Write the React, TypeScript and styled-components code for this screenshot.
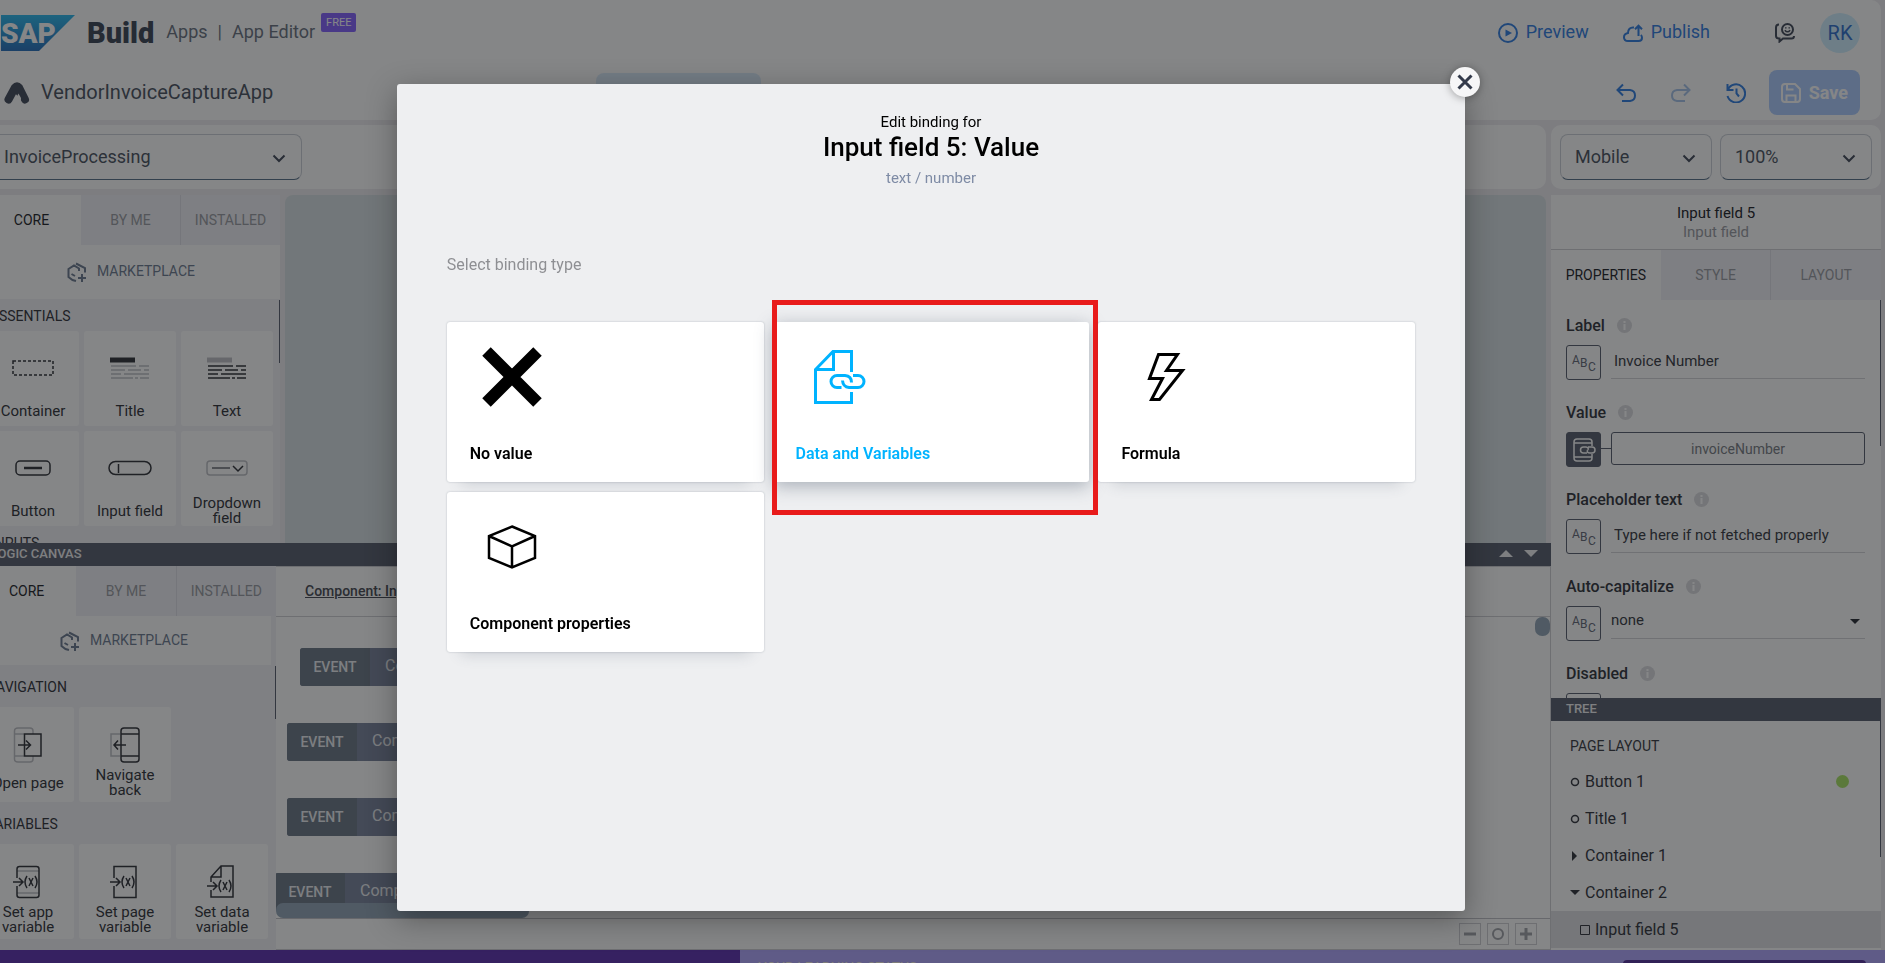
import React from "react";
import styled, { createGlobalStyle } from "styled-components";

const FONT = 'Roboto, "Liberation Sans", Arial, sans-serif';

const GlobalStyle = createGlobalStyle`
  *, *::before, *::after { box-sizing: border-box; }
  html, body { margin: 0; padding: 0; height: 100%; overflow: hidden; }
  body { font-family: ${FONT}; font-size: 15px; color: #2b2f37; background: #efedf1; }
  button, input, select { font-family: inherit; font-size: inherit; color: inherit; margin: 0; }
  button { background: none; border: 0; padding: 0; cursor: pointer; }
  h1, h2, h3, p, ul { margin: 0; padding: 0; font-weight: inherit; font-size: inherit; }
  ul { list-style: none; }
  svg { display: block; flex: none; }
`;

/* ---------- shell ---------- */

const Shell = styled.div`
  display: flex;
  flex-direction: column;
  height: 100vh;
  margin-left: -23px;
  overflow: hidden;
`;

const Workspace = styled.div`
  flex: 1;
  min-height: 0;
  display: flex;
  flex-direction: column;
  padding-right: 4px;
`;

const Header = styled.header`
  flex: none;
  height: 120px;
  background: #fff;
  border-radius: 0 10px 10px 10px;
  padding: 6px 21px 0 24px;
`;

const HeaderRow = styled.div<{ $height: number }>`
  display: flex;
  align-items: center;
  justify-content: space-between;
  height: ${(p) => p.$height}px;
`;

const Group = styled.div<{ $gap: number }>`
  display: flex;
  align-items: center;
  gap: ${(p) => p.$gap}px;
`;

const AppTitle = styled(Group)`
  width: 32%;
  padding-left: 3px;
`;

const Tools = styled(Group)`
  margin-left: auto;
`;

const Brand = styled.span`
  font-size: 29px;
  line-height: 32px;
  font-weight: 900;
  color: #3f4858;
`;

const Crumbs = styled.nav`
  display: flex;
  gap: 10px;
  padding-bottom: 2px;
  font-size: 18px;
  line-height: 22px;
  color: #6d7583;
  a { color: inherit; text-decoration: none; }
`;

const FreeBadge = styled.span`
  align-self: flex-start;
  margin-top: -8px;
  padding: 0 5px;
  font-size: 11px;
  line-height: 19px;
  border-radius: 2px;
  color: #fff;
  background: #8665ff;
`;

const AppName = styled.h1`
  padding-bottom: 2px;
  font-size: 20px;
  line-height: 24px;
  color: #4d5563;
`;

const LinkButton = styled.button`
  display: flex;
  align-items: center;
  gap: 8px;
  font-size: 18px;
  line-height: 22px;
  color: #3580e2;
  span { padding-bottom: 2px; }
`;

const IconButton = styled.button<{ $color: string }>`
  display: flex;
  color: ${(p) => p.$color};
`;

const Avatar = styled.button`
  width: 40px;
  height: 40px;
  border-radius: 50%;
  background: #d1efff;
  color: #3373cf;
  font-size: 20px;
  line-height: 38px;
`;

const SaveButton = styled.button`
  display: flex;
  align-items: center;
  gap: 8px;
  height: 45px;
  padding: 0 12px;
  border-radius: 8px;
  background: #afcdff;
  color: #fff;
  font-size: 18px;
  font-weight: 700;
`;

const CanvasTab = styled.button`
  width: 165px;
  height: 40px;
  border-radius: 8px;
  background: #dcecfb;
`;

/* ---------- toolbar ---------- */

const Toolbar = styled.div`
  flex: none;
  display: flex;
  gap: 5px;
  height: 64px;
  margin: 5px 0 6px;
`;

const ToolbarPanel = styled.div<{ $width?: number }>`
  ${(p) => (p.$width ? `flex: none; width: ${p.$width}px; padding: 0 9px;` : "flex: 1; padding: 0 12px;")}
  display: flex;
  align-items: center;
  gap: 8px;
  background: #fff;
  border-radius: 10px;
`;

const SelectBox = styled.div<{ $width?: number }>`
  position: relative;
  ${(p) => (p.$width ? `width: ${p.$width}px;` : "flex: 1;")}
  select {
    appearance: none;
    width: 100%;
    height: 46px;
    padding: 0 14px 2px;
    border: 1px solid #cdd1d8;
    border-bottom: 1px solid #5b738b;
    border-radius: 8px;
    background: transparent;
    font-size: 18px;
    color: #4d5563;
  }
  svg { position: absolute; right: 16px; top: 20px; pointer-events: none; }
`;

/* ---------- main split ---------- */

const Main = styled.div`
  flex: 1;
  min-height: 0;
  display: flex;
`;

const LeftSide = styled.div`
  flex: 1;
  min-width: 0;
  display: flex;
  flex-direction: column;
`;

const Designer = styled.div`
  flex: 1;
  min-height: 0;
  display: flex;
  gap: 5px;
  padding: 0 5px;
`;

const DeviceArea = styled.div`
  flex: 1;
  background: #d9e1e4;
  border-radius: 8px 8px 0 0;
`;

const Library = styled.aside<{ $width: number }>`
  position: relative;
  flex: none;
  width: ${(p) => p.$width}px;
  display: flex;
  flex-direction: column;
  overflow: hidden;
  background: #f3f3f7;
`;

const ScrollThumb = styled.span<{ $top: number; $height: number }>`
  position: absolute;
  right: 0;
  top: ${(p) => p.$top}px;
  width: 1px;
  height: ${(p) => p.$height}px;
  background: #5b6170;
`;

const Tabs = styled.div`
  flex: none;
  display: flex;
  height: 50px;
`;

const Tab = styled.button<{ $active?: boolean }>`
  flex: 1;
  font-size: 14px;
  color: ${(p) => (p.$active ? "#23252b" : "#9b9da4")};
  background: ${(p) => (p.$active ? "#fff" : "#f1f1f6")};
  & + & + & { border-left: 1px solid #dfdfe6; }
`;

const Marketplace = styled.button<{ $height: number; $inset: number }>`
  flex: none;
  display: flex;
  align-items: center;
  justify-content: center;
  gap: 10px;
  height: ${(p) => p.$height}px;
  margin-right: ${(p) => p.$inset}px;
  font-size: 14px;
  color: #6f7d92;
  background: #fff;
  span { padding-bottom: 2px; }
`;

const GroupTitle = styled.h3<{ $height: number }>`
  height: ${(p) => p.$height}px;
  padding-left: 4px;
  font-size: 14px;
  line-height: ${(p) => p.$height + 2}px;
  color: #32343b;
`;

const Groups = styled.div`
  padding-left: 5px;
`;

const CardGrid = styled.div`
  display: grid;
  grid-template-columns: repeat(3, 92px);
  gap: 5px;
`;

const LibCard = styled.button<{ $compact?: boolean }>`
  display: flex;
  flex-direction: column;
  align-items: center;
  height: 95px;
  padding: ${(p) => (p.$compact ? "14px 0 4px" : "9px 0 0")};
  border-radius: 3px;
  background: #fff;
  color: #32343b;
`;

const CardIcon = styled.span`
  flex: 1;
  display: flex;
  align-items: center;
`;

const CardLabel = styled.span`
  flex: none;
  height: 30px;
  display: flex;
  align-items: center;
  justify-content: center;
  padding: 0 6px;
  font-size: 15px;
  line-height: 15px;
  text-align: center;
`;

/* ---------- logic canvas ---------- */

const DarkBar = styled.div`
  flex: none;
  display: flex;
  align-items: center;
  justify-content: space-between;
  height: 23px;
  padding: 0 13px 2px 14px;
  background: #5b6170;
  color: #f0f0f2;
  font-size: 13px;
  font-weight: 500;
`;

const BarButtons = styled.div`
  display: flex;
  gap: 11px;
`;

const Logic = styled.section`
  flex: none;
  display: flex;
  flex-direction: column;
  height: 407px;
`;

const LogicBody = styled.div`
  flex: 1;
  min-height: 0;
  display: flex;
`;

const Flow = styled.div`
  flex: 1;
  min-width: 0;
  display: flex;
  flex-direction: column;
  background: #fff;
  border: 1px solid #d0d0d5;
  border-left: 0;
`;

const FlowHead = styled.div`
  flex: none;
  height: 50px;
  padding-left: 29px;
  line-height: 48px;
  font-size: 14px;
  font-weight: 500;
  border-bottom: 1px solid #d0d0d5;
  color: #4a4d56;
  a { color: inherit; }
`;

const FlowCanvas = styled.div`
  position: relative;
  flex: 1;
  min-height: 0;
  overflow: hidden;
`;

const FlowNode = styled.div<{ $x: number; $y: number }>`
  position: absolute;
  left: ${(p) => p.$x}px;
  top: ${(p) => p.$y}px;
  display: flex;
  width: 200px;
  height: 38px;
  border-radius: 3px;
  overflow: hidden;
  background: #7c869e;
  color: #eceef2;
  font-size: 16px;
  line-height: 36px;
`;

const FlowKind = styled.span`
  width: 70px;
  margin-right: 15px;
  text-align: center;
  font-size: 14px;
  line-height: 38px;
  font-weight: 500;
  background: #6f7a88;
`;

const HScroll = styled.div`
  position: absolute;
  left: 0;
  bottom: 0;
  width: 253px;
  height: 15px;
  border-radius: 7px;
  background: #95a7b8;
`;

const VScroll = styled.div`
  position: absolute;
  right: 0;
  top: 0;
  width: 15px;
  height: 19px;
  border-radius: 7px;
  background: #95a7b8;
`;

const FlowFoot = styled.div`
  flex: none;
  display: flex;
  justify-content: flex-end;
  align-items: center;
  gap: 6px;
  height: 31px;
  padding-right: 13px;
  border-top: 1px solid #c2c2c8;
`;

const ZoomButton = styled.button`
  display: flex;
  align-items: center;
  justify-content: center;
  width: 22px;
  height: 22px;
  border: 1px solid #d0d0d5;
  color: #a3a5ab;
`;

/* ---------- right side ---------- */

const RightSide = styled.aside`
  flex: none;
  width: 330px;
  display: flex;
  flex-direction: column;
  background: #fff;
`;

const ObjectHead = styled.div`
  flex: none;
  height: 55px;
  padding-top: 9px;
  border-bottom: 1px solid #d0d0d5;
  text-align: center;
  font-size: 15px;
  line-height: 19px;
  color: #23252b;
  p { color: #9b9da4; }
`;

const Properties = styled.div`
  position: relative;
  flex: 1;
  min-height: 0;
  overflow: hidden;
  padding: 15px 16px 0 15px;
`;

const Field = styled.div`
  height: 87px;
`;

const FieldHead = styled.div`
  display: flex;
  align-items: center;
  gap: 12px;
  height: 20px;
  margin-bottom: 10px;
  font-size: 16px;
  font-weight: 500;
  color: #34373e;
`;

const FieldRow = styled.div`
  display: flex;
  gap: 10px;
`;

const TypeButton = styled.button<{ $filled?: boolean }>`
  flex: none;
  display: flex;
  align-items: center;
  justify-content: center;
  width: 35px;
  height: 35px;
  border: 1px solid #5b6170;
  border-radius: 3px;
  background: ${(p) => (p.$filled ? "#5b6170" : "transparent")};
  color: ${(p) => (p.$filled ? "#fff" : "#666b78")};
`;

const TextInput = styled.input`
  flex: 1;
  min-width: 0;
  height: 34px;
  padding: 0 3px 2px;
  border: 0;
  border-bottom: 1px solid #d4d5d9;
  background: transparent;
  font-size: 15px;
  color: #3a3d45;
`;

const PlainSelect = styled.div`
  position: relative;
  flex: 1;
  select {
    appearance: none;
    width: 100%;
    height: 33px;
    padding: 0 0 4px;
    border: 0;
    border-bottom: 1px solid #d4d5d9;
    background: transparent;
    font-size: 15px;
    color: #3a3d45;
  }
  svg { position: absolute; right: 5px; top: 13px; pointer-events: none; }
`;

const Connector = styled.span`
  width: 10px;
  height: 17px;
  margin: 0 -10px;
  border-bottom: 1px solid #5b6170;
`;

const BoundValue = styled.button`
  flex: 1;
  height: 33px;
  border: 1px solid #5b6170;
  border-radius: 3px;
  font-size: 14px;
  color: #7b7e86;
`;

const Tree = styled.div`
  position: relative;
  flex: none;
  height: 252px;
`;

const TreeBar = styled(DarkBar)`
  padding: 0 15px 2px;
`;

const TreeTitle = styled.h3`
  height: 42px;
  padding-left: 19px;
  font-size: 14px;
  line-height: 50px;
  color: #3a3d45;
`;

const TreeRow = styled.li<{ $depth: number; $selected?: boolean }>`
  display: flex;
  align-items: center;
  gap: 5px;
  height: 37px;
  padding-left: ${(p) => 19 + p.$depth * 10}px;
  padding-right: 32px;
  background: ${(p) => (p.$selected ? "#e0e0e4" : "transparent")};
  color: #34373e;
`;

const TreeName = styled.span`
  flex: 1;
  font-size: 16px;
  line-height: 20px;
`;

const StatusDot = styled.span`
  width: 13px;
  height: 13px;
  border-radius: 50%;
  background: #abe567;
`;

/* ---------- bottom banner ---------- */

const Banner = styled.footer`
  flex: none;
  display: flex;
  height: 13px;
  overflow: hidden;
  background: #b3a9ff;
`;

const BannerLead = styled.div`
  width: 40%;
  background: #6135b2;
`;

const BannerInfo = styled.div`
  flex: 1;
  display: flex;
  justify-content: space-between;
  align-items: flex-start;
  padding: 10px 19px 0 18px;
  font-size: 14px;
  line-height: 16px;
  color: #f3efe0;
`;

const BannerButton = styled.button`
  width: 243px;
  height: 36px;
  border-radius: 4px;
  background: #57349f;
`;

/* ---------- dialog ---------- */

const Overlay = styled.div`
  position: fixed;
  inset: 0 0 0 -23px;
  display: flex;
  justify-content: center;
  padding: 84px 0 52px;
  background: rgba(11, 13, 16, 0.5);
`;

const Dialog = styled.section`
  position: relative;
  width: 56%;
  padding: 28px 50px;
  border-radius: 3px;
  background: #eeeff1;
  box-shadow: 0 8px 30px rgba(0, 0, 0, 0.35);
  color: #000;
`;

const CloseButton = styled.button`
  position: absolute;
  top: -17px;
  right: -15px;
  display: flex;
  align-items: center;
  justify-content: center;
  width: 30px;
  height: 30px;
  border-radius: 50%;
  background: #f6f6f7;
  color: #333a4a;
  box-shadow: 0 1px 8px rgba(0, 0, 0, 0.35);
`;

const DialogHead = styled.header`
  text-align: center;
  font-size: 15px;
  line-height: 20px;
  h2 { font-size: 26px; line-height: 30px; font-weight: 500; }
`;

const TypeHint = styled.p`
  margin-top: 6px;
  color: #7e8ba5;
`;

const Prompt = styled.p`
  margin: 67px 0 47px;
  font-size: 16px;
  line-height: 20px;
  color: #8e8f93;
`;

const Options = styled.div`
  display: grid;
  grid-template-columns: repeat(3, 1fr);
  gap: 10px 9px;
`;

const OptionSlot = styled.div`
  position: relative;
  display: flex;
`;

const Option = styled.button<{ $active?: boolean }>`
  flex: 1;
  display: flex;
  flex-direction: column;
  justify-content: space-between;
  align-items: flex-start;
  height: 160px;
  padding: 25px 23px 18px;
  border-radius: 3px;
  background: #fff;
  font-size: 16px;
  line-height: 20px;
  font-weight: 600;
  color: ${(p) => (p.$active ? "#00b3ff" : "#000")};
  box-shadow: ${(p) =>
    p.$active
      ? "0 4px 18px rgba(60, 75, 95, 0.4)"
      : "0 0 2px rgba(60, 75, 95, 0.35), 0 16px 14px -14px rgba(60, 75, 95, 0.2)"};
  svg { margin-left: 12px; }
`;

const Highlight = styled.span`
  position: absolute;
  inset: -22px -9px -33px -1px;
  border: 5px solid #e81b1b;
  pointer-events: none;
`;

/* ---------- icons ---------- */

type StrokeProps = {
  size?: number;
  width?: number;
  height?: number;
  box: string;
  w?: number;
  children: React.ReactNode;
};

const Stroke = ({ size, width, height, box, w = 2, children }: StrokeProps) => (
  <svg
    width={width ?? size}
    height={height ?? size}
    viewBox={box}
    fill="none"
    stroke="currentColor"
    strokeWidth={w}
    aria-hidden="true"
  >
    {children}
  </svg>
);

const SapLogo = () => (
  <svg width="74" height="36" viewBox="0 0 74 36" role="img" aria-label="SAP">
    <defs>
      <linearGradient id="sap" x1="0" y1="0" x2="0" y2="1">
        <stop offset="0" stopColor="#2fb9ee" />
        <stop offset="1" stopColor="#2a72bd" />
      </linearGradient>
    </defs>
    <path d="M0 0H74L38 36H0Z" fill="url(#sap)" />
    <text x="0" y="28" fontFamily={FONT} fontSize="28" fontWeight="900" fill="#fff">
      SAP
    </text>
  </svg>
);

const AppLogo = () => (
  <svg width="26" height="22" viewBox="0 0 26 22" aria-hidden="true">
    <path
      d="M4.5 17.5 11 5.5Q13 3 15 5.5L21 17.5M14 8.5 17 12"
      fill="none"
      stroke="#454c5c"
      strokeWidth="8"
      strokeLinecap="round"
      strokeLinejoin="round"
    />
    <path d="M9 22 14.5 11.5 17 16 16.5 22Z" fill="#fff" />
  </svg>
);

const PlayIcon = () => (
  <Stroke size={20} box="0 0 20 20">
    <circle cx="10" cy="10" r="9" />
    <path d="M7.5 6.5 14 10 7.5 13.5Z" fill="currentColor" stroke="none" />
  </Stroke>
);

const CloudIcon = () => (
  <Stroke size={20} box="0 0 20 20">
    <path d="M11 4.5C7 4 5 6.500 5 10 2.500 10.500 1 12 1 14.200 1 16.500 2.500 18 5 18H15.500C17.800 18 19 16.500 19 14.700 19 13.500 18.500 12.500 17.800 12M15.500 13V3M12 6.200 15.500 2.700 19 6.200" />
  </Stroke>
);

const FeedbackIcon = () => (
  <Stroke size={20} box="0 0 20 20">
    <path d="M4 1.5C2 1.5 1 2.8 1 4.5V13Q1 15.5 4.500 15.500V18.500L8 15.500H16.500Q19 15.500 19 13" />
    <circle cx="12.500" cy="6.500" r="5.500" />
    <path d="M9.800 7.200Q12.500 10.500 15.200 7.200M10.800 4.200V5.500M14.200 4.200V5.500" strokeWidth="1.500" />
  </Stroke>
);

const UndoIcon = () => (
  <Stroke size={20} box="0 0 20 20">
    <path d="M7 1.5 1.5 7 7 12.5M1.5 7H14Q19 7.5 19 12.5 19 17.5 14 18H6" />
  </Stroke>
);

const RedoIcon = () => (
  <Stroke size={20} box="0 0 20 20">
    <path d="M13 1.5 18.5 7 13 12.5M18.5 7H6Q1 7.5 1 12.5 1 17.5 6 18H14" />
  </Stroke>
);

const HistoryIcon = () => (
  <Stroke size={20} box="0 0 20 20">
    <path d="M1.5 1V7H7.5M2 6.500A9 9 0 1 1 1.500 13M10.500 5.500V10.500L13 13.500" />
  </Stroke>
);

const SaveIcon = () => (
  <Stroke size={20} box="0 0 20 20">
    <path d="M4 1H14L19 6V16Q19 19 16 19H4Q1 19 1 16V4Q1 1 4 1ZM6 1V6.500H12.500M5.500 19V12.500H14.500V19" />
  </Stroke>
);

const Chevron = () => (
  <Stroke width={14} height={9} box="0 0 14 9">
    <path d="M1.500 1.500 7 7 12.500 1.500" stroke="#454c5c" />
  </Stroke>
);

const MarketIcon = () => (
  <Stroke size={20} box="0 0 20 20" w={2}>
    <path d="M9 19 5.500 18 1.500 15V7L7 3.500 12 6.500V9M9 1.500 18 6V10.500M15 12V20M11 16H19M4.500 12 8 14" />
  </Stroke>
);

const CrossIcon = () => (
  <Stroke size={16} box="0 0 16 16" w={3}>
    <path d="M1.500 1.500 14.500 14.500M14.500 1.500 1.500 14.500" />
  </Stroke>
);

const InfoIcon = () => (
  <svg width="15" height="15" viewBox="0 0 15 15" aria-hidden="true">
    <circle cx="7.500" cy="7.500" r="7.500" fill="#dcdce0" />
    <path d="M7.500 3V5M7.500 6V12" stroke="#fff" strokeWidth="2" />
  </svg>
);

const AbcIcon = () => (
  <svg width="33" height="33" viewBox="0 0 33 33" aria-label="Text" fontFamily={FONT} fontSize="12" fill="currentColor">
    <text x="5" y="18">A</text>
    <text x="13" y="21">B</text>
    <text x="21" y="25">C</text>
  </svg>
);

const PhoneLinkIcon = () => (
  <Stroke size={24} box="0 0 24 24" w={1.5}>
    <path d="M20 8V4Q20 1 17 1H5Q2 1 2 4V20Q2 23 5 23H17Q20 23 20 20V16M2 5H20M2 19H20" />
    <path d="M15 15H11.500A3 3 0 0 1 11.500 9H14Q17 9.500 16 12M16 9H20A3 3 0 0 1 20 15H18Q14.500 15 15.500 12" />
  </Stroke>
);

const TriUp = () => (
  <svg width="14" height="7" viewBox="0 0 14 7" aria-hidden="true"><path d="M0 7 7 0 14 7Z" fill="currentColor" /></svg>
);
const TriDown = () => (
  <svg width="14" height="7" viewBox="0 0 14 7" aria-hidden="true"><path d="M0 0H14L7 7Z" fill="currentColor" /></svg>
);
const TriSmall = () => (
  <svg width="10" height="5" viewBox="0 0 10 5" aria-hidden="true"><path d="M0 0H10L5 5Z" fill="currentColor" /></svg>
);
const TriRight = () => (
  <svg width="10" height="10" viewBox="0 0 10 10" aria-hidden="true"><path d="M2 0V10L7 5Z" fill="currentColor" /></svg>
);
const Ring = () => (
  <Stroke size={10} box="0 0 10 10" w={1.5}><circle cx="5" cy="5" r="3.500" /></Stroke>
);
const Square = () => (
  <Stroke size={10} box="0 0 10 10" w={1}><path d="M.5.5H9.5V9.5H.5Z" /></Stroke>
);

const ContainerIcon = () => (
  <Stroke width={42} height={16} box="0 0 42 16" w={1.5}>
    <path d="M1 1H41V15H1Z" strokeDasharray="3 2" />
  </Stroke>
);

const TextLines = ({ title }: { title: boolean }) => (
  <svg width="40" height="22" viewBox="0 0 40 22" aria-hidden="true">
    <path d="M0 3H25" stroke={title ? "#32343b" : "#c0c1c6"} strokeWidth="5" />
    <path
      d="M1 9H26M29 9H39M1 13H15M18 13H31M34 13H39M1 17H11M14 17H39M1 21H23M25 21H28M30 21H39"
      stroke={title ? "#c0c1c6" : "#32343b"}
      strokeWidth="1.500"
    />
  </svg>
);

const ButtonIcon = () => (
  <Stroke width={36} height={16} box="0 0 36 16" w={1.5}>
    <rect x="1" y="1" width="34" height="14" rx="4" />
    <path d="M9 8H27" strokeWidth="2.500" />
  </Stroke>
);

const InputIcon = () => (
  <Stroke width={44} height={16} box="0 0 44 16" w={1.5}>
    <rect x="1" y="1.500" width="42" height="13" rx="6.500" />
    <path d="M10.500 4V13" />
  </Stroke>
);

const DropdownIcon = () => (
  <Stroke width={42} height={16} box="0 0 42 16" w={1.5}>
    <rect x="1" y="1" width="40" height="14" rx="3" stroke="#c0c1c6" />
    <path d="M6 8H24" stroke="#666970" />
    <path d="M27 6 32 11 37 6" />
  </Stroke>
);

const OpenPageIcon = () => (
  <Stroke width={30} height={36} box="0 0 30 36" w={1.5}>
    <path d="M20 7V4Q20 1 17 1H5Q1.500 1 1.500 4V32Q1.500 35 5 35H17Q20 35 20 32V29M1.500 7H11M1.500 29H11" stroke="#c0c1c6" />
    <path d="M11.500 7H28V29H11.500ZM5 18H17M13 13.500 17.500 18 13 22.500" />
  </Stroke>
);

const BackIcon = () => (
  <Stroke width={30} height={36} box="0 0 30 36" w={1.5}>
    <path d="M10 7H1V29H10" stroke="#c0c1c6" />
    <rect x="11" y="1" width="18" height="34" rx="3" />
    <path d="M11 7H29M11 29H29M4 18H16M8 13.500 4 18 8 22.500" />
  </Stroke>
);

const VariableIcon = ({ kind }: { kind: "app" | "page" | "data" }) => {
  const y = kind === "data" ? 21 : 17;
  return (
    <Stroke width={32} height={34} box="0 0 32 34" w={1.5}>
      {kind === "app" && (
        <>
          <path d="M5 6H27M5 28H27" stroke="#c0c1c6" />
          <path d="M5 13V4Q5 1.500 7.500 1.500H24.500Q27 1.500 27 4V30Q27 32.500 24.500 32.500H7.500Q5 32.500 5 30V21" />
        </>
      )}
      {kind === "page" && <path d="M5 13V1.500H27V32.500H5V21" />}
      {kind === "data" && <path d="M5 17V12L15 1H27V32H5V25M15 1V12H5" />}
      <path d={`M1 ${y}H10M7 ${y - 4}L11 ${y}L7 ${y + 4}`} />
      <path d={`M15 ${y - 6}Q11 ${y} 15 ${y + 6}M23 ${y - 6}Q27 ${y} 23 ${y + 6}M17 ${y - 4}L21 ${y + 4}M21 ${y - 4}L17 ${y + 4}`} />
    </Stroke>
  );
};

const NoValueIcon = () => (
  <Stroke size={60} box="0 0 60 60" w={12}>
    <path d="M4.500 4.500 55.500 55.500M55.500 4.500 4.500 55.500" />
  </Stroke>
);

const DataIcon = () => (
  <Stroke size={60} box="0 0 60 60" w={3}>
    <path d="M43.500 25V4.500H25L7.500 22.500V55.500H43.500V45M25.500 5V22.500H8" />
    <path d="M33.500 40.500H29A6 6 0 0 1 29 28.500H37Q43.500 29 43.500 35.500M45 28.500H50A6 6 0 0 1 50 40.500H41Q35 40 34.500 33.500" />
  </Stroke>
);

const BoltIcon = () => (
  <Stroke size={60} box="0 0 60 60" w={3}>
    <path d="M25.500 7.500H44.500L33.500 23.500H49.500L26.500 52.500H18.500L29.500 31.500H16.500Z" />
  </Stroke>
);

const CubeIcon = () => (
  <Stroke size={60} box="0 0 60 60" w={2.5}>
    <path d="M30 9.500 53 19V41L30 50.500 7 41V19ZM7 19 30 29.500 53 19M30 29.500V50.500" />
  </Stroke>
);

/* ---------- parts ---------- */

type LibItem = { label: string; icon: React.ReactNode };

const Cards = ({ items, compact }: { items: LibItem[]; compact?: boolean }) => (
  <CardGrid>
    {items.map((item) => (
      <LibCard key={item.label} $compact={compact}>
        <CardIcon>{item.icon}</CardIcon>
        <CardLabel>{item.label}</CardLabel>
      </LibCard>
    ))}
  </CardGrid>
);

const LibTabs = () => (
  <Tabs role="tablist">
    <Tab role="tab" $active>CORE</Tab>
    <Tab role="tab">BY ME</Tab>
    <Tab role="tab">INSTALLED</Tab>
  </Tabs>
);

const essentials: LibItem[] = [
  { label: "Container", icon: <ContainerIcon /> },
  { label: "Title", icon: <TextLines title /> },
  { label: "Text", icon: <TextLines title={false} /> },
  { label: "Button", icon: <ButtonIcon /> },
  { label: "Input field", icon: <InputIcon /> },
  { label: "Dropdown field", icon: <DropdownIcon /> },
];

const navigation: LibItem[] = [
  { label: "Open page", icon: <OpenPageIcon /> },
  { label: "Navigate back", icon: <BackIcon /> },
];

const variables: LibItem[] = [
  { label: "Set app variable", icon: <VariableIcon kind="app" /> },
  { label: "Set page variable", icon: <VariableIcon kind="page" /> },
  { label: "Set data variable", icon: <VariableIcon kind="data" /> },
];

const nodes = [
  { x: 24, y: 31 },
  { x: 11, y: 106 },
  { x: 11, y: 181 },
  { x: -1, y: 256 },
];

const tree = [
  { name: "Button 1", mark: <Ring />, depth: 0, dot: true },
  { name: "Title 1", mark: <Ring />, depth: 0 },
  { name: "Container 1", mark: <TriRight />, depth: 0 },
  { name: "Container 2", mark: <TriSmall />, depth: 0 },
  { name: "Input field 5", mark: <Square />, depth: 1, selected: true },
];

const options = [
  { label: "No value", icon: <NoValueIcon /> },
  { label: "Data and Variables", icon: <DataIcon />, active: true },
  { label: "Formula", icon: <BoltIcon /> },
  { label: "Component properties", icon: <CubeIcon /> },
];

const PropField = ({ label, id, children }: { label: string; id: string; children?: React.ReactNode }) => (
  <Field>
    <FieldHead>
      <label htmlFor={id}>{label}</label>
      <InfoIcon />
    </FieldHead>
    <FieldRow>{children}</FieldRow>
  </Field>
);

const AbcButton = () => (
  <TypeButton aria-label="Binding type: static text"><AbcIcon /></TypeButton>
);

export default function App() {
  return (
    <>
      <GlobalStyle />
      <Shell>
        <Workspace>
          <Header>
            <HeaderRow $height={54}>
              <Group $gap={12}>
                <SapLogo />
                <Brand>Build</Brand>
                <Group $gap={6}>
                  <Crumbs>
                    <a href="#apps">Apps</a>
                    <span>|</span>
                    <a href="#editor">App Editor</a>
                  </Crumbs>
                  <FreeBadge>FREE</FreeBadge>
                </Group>
              </Group>
              <Group $gap={65}>
                <Group $gap={34}>
                  <LinkButton><PlayIcon /><span>Preview</span></LinkButton>
                  <LinkButton><CloudIcon /><span>Publish</span></LinkButton>
                </Group>
                <Group $gap={25}>
                  <IconButton $color="#454c5c" aria-label="Feedback"><FeedbackIcon /></IconButton>
                  <Avatar>RK</Avatar>
                </Group>
              </Group>
            </HeaderRow>
            <HeaderRow $height={65}>
              <AppTitle $gap={11}>
                <AppLogo />
                <AppName>VendorInvoiceCaptureApp</AppName>
              </AppTitle>
              <CanvasTab aria-label="UI canvas" />
              <Tools $gap={23}>
                <Group $gap={35}>
                  <IconButton $color="#3580e2" aria-label="Undo"><UndoIcon /></IconButton>
                  <IconButton $color="#a9c5ea" aria-label="Redo"><RedoIcon /></IconButton>
                  <IconButton $color="#3580e2" aria-label="History"><HistoryIcon /></IconButton>
                </Group>
                <SaveButton><SaveIcon />Save</SaveButton>
              </Tools>
            </HeaderRow>
          </Header>

          <Toolbar>
            <ToolbarPanel>
              <SelectBox $width={313}>
                <select aria-label="Page" defaultValue="p"><option value="p">InvoiceProcessing</option></select>
                <Chevron />
              </SelectBox>
            </ToolbarPanel>
            <ToolbarPanel $width={330}>
              <SelectBox>
                <select aria-label="Device" defaultValue="m"><option value="m">Mobile</option></select>
                <Chevron />
              </SelectBox>
              <SelectBox>
                <select aria-label="Zoom" defaultValue="100"><option value="100">100%</option></select>
                <Chevron />
              </SelectBox>
            </ToolbarPanel>
          </Toolbar>

          <Main>
            <LeftSide>
              <Designer>
                <Library $width={298}>
                  <LibTabs />
                  <Marketplace $height={54} $inset={0}><MarketIcon /><span>MARKETPLACE</span></Marketplace>
                  <Groups>
                    <GroupTitle $height={32}>ESSENTIALS</GroupTitle>
                    <Cards items={essentials} />
                    <GroupTitle $height={32}>INPUTS</GroupTitle>
                  </Groups>
                  <ScrollThumb $top={105} $height={63} />
                </Library>
                <DeviceArea />
              </Designer>
              <Logic>
                <DarkBar>
                  <h2>LOGIC CANVAS</h2>
                  <BarButtons>
                    <button aria-label="Expand"><TriUp /></button>
                    <button aria-label="Collapse"><TriDown /></button>
                  </BarButtons>
                </DarkBar>
                <LogicBody>
                  <Library $width={299}>
                    <LibTabs />
                    <Marketplace $height={49} $inset={5}><MarketIcon /><span>MARKETPLACE</span></Marketplace>
                    <Groups>
                      <GroupTitle $height={42}>NAVIGATION</GroupTitle>
                      <Cards items={navigation} compact />
                      <GroupTitle $height={42}>VARIABLES</GroupTitle>
                      <Cards items={variables} compact />
                    </Groups>
                    <ScrollThumb $top={100} $height={53} />
                  </Library>
                  <Flow>
                    <FlowHead><a href="#component">Component: Input field 5</a></FlowHead>
                    <FlowCanvas>
                      {nodes.map((n) => (
                        <FlowNode key={n.y} $x={n.x} $y={n.y}>
                          <FlowKind>EVENT</FlowKind>
                          Component
                        </FlowNode>
                      ))}
                      <HScroll />
                      <VScroll />
                    </FlowCanvas>
                    <FlowFoot>
                      <ZoomButton aria-label="Zoom out">
                        <Stroke size={12} box="0 0 12 12" w={3}><path d="M0 6H12" /></Stroke>
                      </ZoomButton>
                      <ZoomButton aria-label="Reset zoom">
                        <Stroke size={12} box="0 0 12 12"><circle cx="6" cy="6" r="5" /></Stroke>
                      </ZoomButton>
                      <ZoomButton aria-label="Zoom in">
                        <Stroke size={12} box="0 0 12 12" w={3}><path d="M0 6H12M6 0V12" /></Stroke>
                      </ZoomButton>
                    </FlowFoot>
                  </Flow>
                </LogicBody>
              </Logic>
            </LeftSide>

            <RightSide>
              <ObjectHead>
                <h2>Input field 5</h2>
                <p>Input field</p>
              </ObjectHead>
              <Tabs role="tablist">
                <Tab role="tab" $active>PROPERTIES</Tab>
                <Tab role="tab">STYLE</Tab>
                <Tab role="tab">LAYOUT</Tab>
              </Tabs>
              <Properties>
                <PropField label="Label" id="label">
                  <AbcButton />
                  <TextInput id="label" defaultValue="Invoice Number" />
                </PropField>
                <PropField label="Value" id="value">
                  <TypeButton $filled aria-label="Binding type: variable"><PhoneLinkIcon /></TypeButton>
                  <Connector />
                  <BoundValue id="value">invoiceNumber</BoundValue>
                </PropField>
                <PropField label="Placeholder text" id="placeholder">
                  <AbcButton />
                  <TextInput id="placeholder" defaultValue="Type here if not fetched properly" />
                </PropField>
                <PropField label="Auto-capitalize" id="capitalize">
                  <AbcButton />
                  <PlainSelect>
                    <select id="capitalize" defaultValue="none"><option value="none">none</option></select>
                    <TriSmall />
                  </PlainSelect>
                </PropField>
                <PropField label="Disabled" id="disabled">
                  <TypeButton id="disabled" />
                </PropField>
                <ScrollThumb $top={0} $height={146} />
              </Properties>
              <Tree>
                <TreeBar><h2>TREE</h2></TreeBar>
                <TreeTitle>PAGE LAYOUT</TreeTitle>
                <ul>
                  {tree.map((t) => (
                    <TreeRow key={t.name} $depth={t.depth} $selected={t.selected}>
                      {t.mark}
                      <TreeName>{t.name}</TreeName>
                      {t.dot && <StatusDot />}
                    </TreeRow>
                  ))}
                </ul>
                <ScrollThumb $top={23} $height={136} />
              </Tree>
            </RightSide>
          </Main>
        </Workspace>
        <Banner>
          <BannerLead />
          <BannerInfo>
            <span>YOUR LEARNING STATUS</span>
            <BannerButton aria-label="Continue learning" />
          </BannerInfo>
        </Banner>
      </Shell>

      <Overlay>
        <Dialog role="dialog" aria-modal="true" aria-labelledby="dialog-title">
          <CloseButton aria-label="Close"><CrossIcon /></CloseButton>
          <DialogHead>
            <p>Edit binding for</p>
            <h2 id="dialog-title">Input field 5: Value</h2>
            <TypeHint>text / number</TypeHint>
          </DialogHead>
          <Prompt>Select binding type</Prompt>
          <Options>
            {options.map((o) => (
              <OptionSlot key={o.label}>
                <Option $active={o.active}>
                  {o.icon}
                  {o.label}
                </Option>
                {o.active && <Highlight />}
              </OptionSlot>
            ))}
          </Options>
        </Dialog>
      </Overlay>
    </>
  );
}
